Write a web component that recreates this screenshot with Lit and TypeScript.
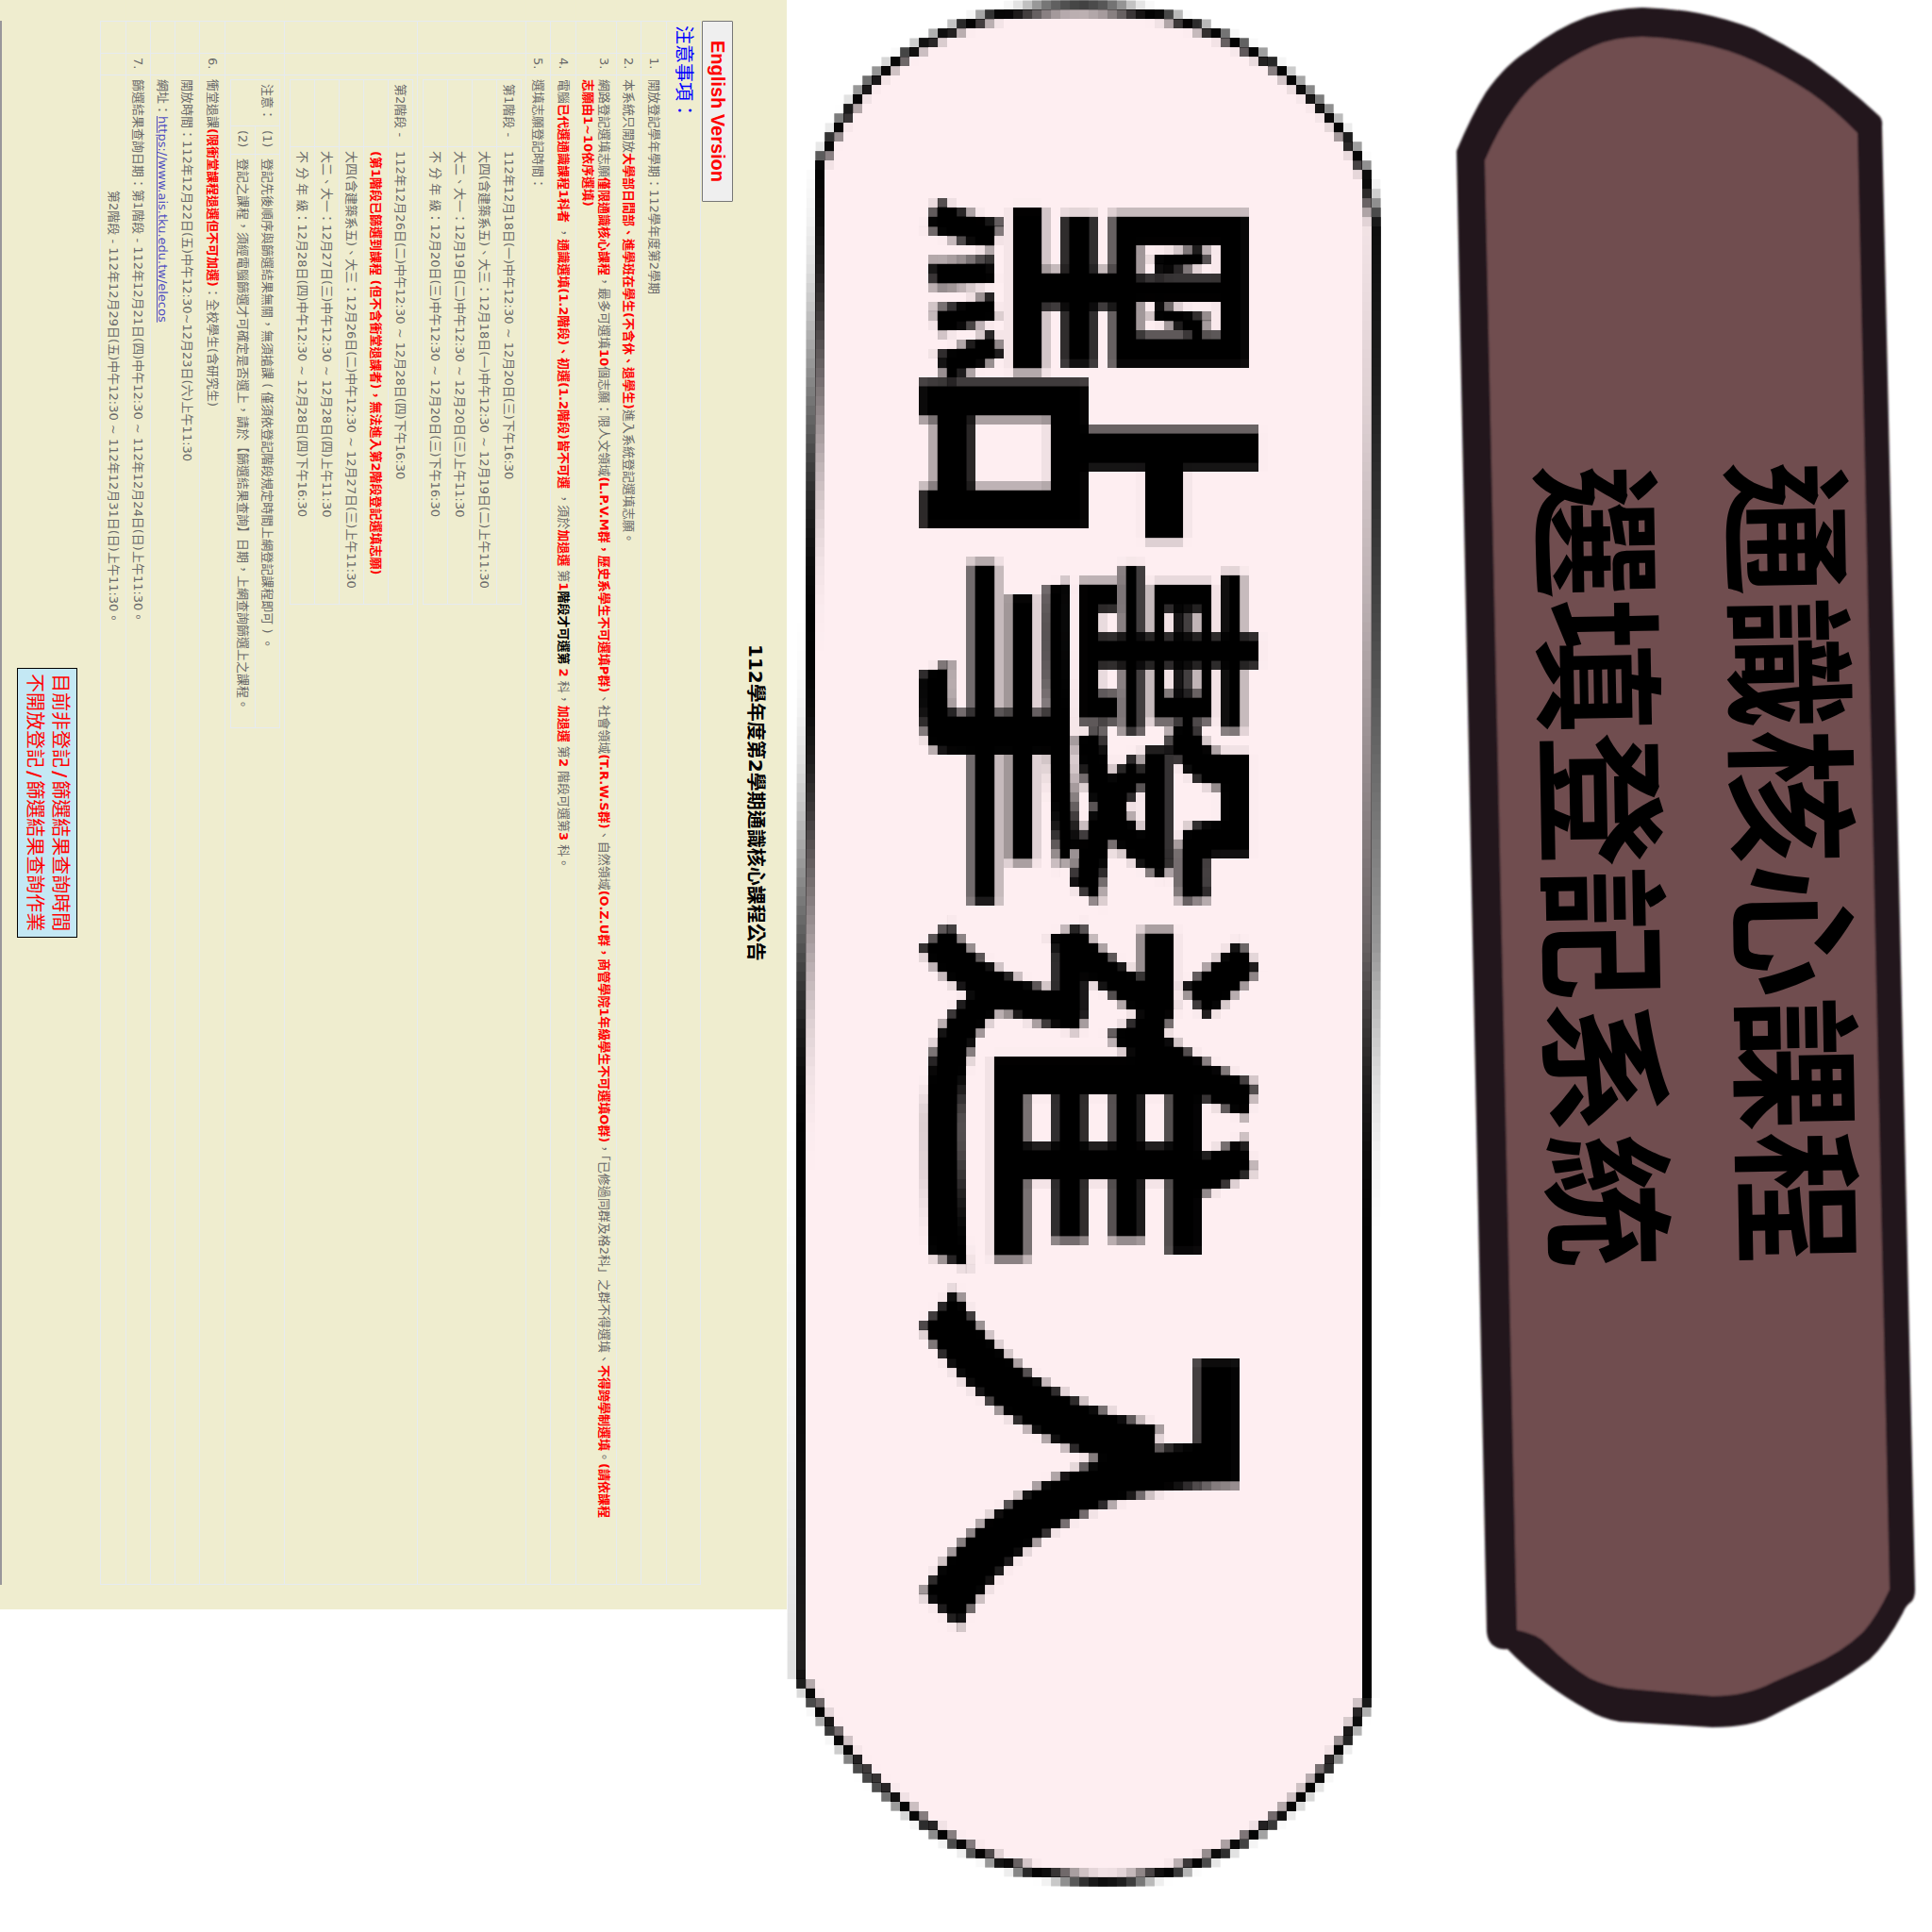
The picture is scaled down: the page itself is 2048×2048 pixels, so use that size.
import { LitElement, html, css } from "lit";
import { customElement } from "lit/decorators.js";

const fonts = css`"DejaVu Sans", "Noto Sans CJK TC", sans-serif`;

@customElement("system-banner")
class SystemBanner extends LitElement {
  static styles = css`
    :host {
      display: block;
      position: relative;
      writing-mode: vertical-rl;
      text-orientation: sideways;
    }
    .art {
      position: absolute;
      top: 0;
      left: 0;
      width: 100%;
      height: auto;
    }
    .name {
      position: relative;
      margin: 0;
      padding-block-start: 37px;
      padding-inline-start: 490px;
      font: 700 142px/202px "Noto Sans CJK TC", sans-serif;
      color: #000;
      transform: rotate(-1deg);
      white-space: nowrap;
    }
    .line {
      display: block;
    }
  `;
  render() {
    return html`
      <svg class="art" viewBox="1474 0 574 1840" aria-hidden="true">
        <defs>
          <filter id="soft" x="-2%" y="-2%" width="104%" height="104%">
            <feGaussianBlur stdDeviation="1" />
          </filter>
        </defs>
        <g filter="url(#soft)">
          <path
            fill="#21151c"
            d="M1544 160Q1560 122 1575 98Q1596 68 1622 52Q1650 30 1682 18Q1710 9 1741 8Q1772 9 1801 14Q1832 20 1860 31Q1890 46 1919 64Q1946 83 1972 105L1991 122Q1996 126 1995 134L2030 1685Q2030 1694 2026 1698Q2020 1702 2017 1710Q2000 1742 1982 1759Q1952 1782 1919 1798L1878 1819Q1856 1831 1815 1831L1717 1825Q1698 1822 1682 1812Q1660 1800 1640 1785Q1617 1768 1598 1748Q1590 1749 1584 1745Q1577 1741 1576 1730Z"
          />
          <path
            fill="#6f4d50"
            d="M1574 170Q1588 137 1605 114Q1620 92 1640 78Q1664 60 1689 49Q1712 39 1741 39Q1772 40 1801 46Q1832 52 1860 65Q1890 79 1919 98Q1946 117 1969 141L2003 1685Q1990 1713 1975 1730Q1952 1752 1919 1766L1880 1783Q1852 1798 1815 1798L1724 1790Q1704 1788 1685 1779Q1662 1765 1640 1743Q1630 1732 1608 1728Z"
          />
        </g>
      </svg>
      <h1 class="name">
        <span class="line">通識核心課程</span>
        <span class="line">選填登記系統</span>
      </h1>
    `;
  }
}

@customElement("enter-link")
class EnterLink extends LitElement {
  static styles = css`
    :host {
      display: block;
      writing-mode: vertical-rl;
      text-orientation: sideways;
    }
    .enter {
      display: block;
      position: relative;
      block-size: 100%;
      inline-size: 2010px;
      box-sizing: border-box;
      padding-block-start: 98px;
      padding-inline-start: 201px;
      font: 700 384px/400px "Noto Sans CJK TC", sans-serif;
      color: #000;
      text-decoration: none;
      white-space: nowrap;
      filter: url(#mosaic);
    }
    .art,
    .defs {
      position: absolute;
      top: 0;
      left: 0;
    }
    .art {
      width: 100%;
      height: auto;
    }
    .label {
      position: relative;
    }
  `;
  render() {
    return html`
      <a class="enter" href="#enter">
        <svg class="art" viewBox="834 0 640 2010" aria-hidden="true">
          <path
            fill="#feeef1"
            stroke="#000"
            stroke-width="10"
            d="M869 180Q878 148 900 119Q915 93 935 78Q964 54 998 38Q1030 22 1066 15Q1105 9 1146 9Q1190 9 1230 17Q1275 28 1314 48Q1349 66 1377 92Q1400 112 1419 136Q1437 160 1449 190L1457 240L1453 1000L1449 1300L1449 1798Q1436 1830 1419 1854Q1400 1884 1377 1906Q1347 1935 1314 1953Q1276 1975 1234 1985Q1200 1993 1167 1993Q1120 1990 1082 1980Q1038 1967 998 1944Q952 1913 914 1874Q878 1832 847 1775L849 1250L859 700Z"
          />
        </svg>
        <span class="label">點擊進入</span>
      </a>
      <svg class="defs" width="0" height="0" aria-hidden="true">
        <filter
          id="mosaic"
          filterUnits="userSpaceOnUse"
          x="0"
          y="0"
          width="640"
          height="2010"
          color-interpolation-filters="sRGB"
        >
          <feGaussianBlur in="SourceGraphic" stdDeviation="2" result="even" />
          <feFlood x="4" y="4" width="2" height="2" flood-color="#000" />
          <feComposite width="10" height="10" />
          <feTile result="grid" />
          <feComposite in="even" in2="grid" operator="in" />
          <feMorphology operator="dilate" radius="4" />
        </filter>
      </svg>
    `;
  }
}

interface Stage {
  label: string;
  rows: unknown[];
}

const stages: Stage[] = [
  {
    label: "第1階段 -",
    rows: [
      "112年12月18日(一)中午12:30 ~ 12月20日(三)下午16:30",
      "大四(含建築系五)、大三：12月18日(一)中午12:30 ~ 12月19日(二)上午11:30",
      "大二、大一：12月19日(二)中午12:30 ~ 12月20日(三)上午11:30",
      "不 分 年 級：12月20日(三)中午12:30 ~ 12月20日(三)下午16:30",
    ],
  },
  {
    label: "第2階段 -",
    rows: [
      "112年12月26日(二)中午12:30 ~ 12月28日(四)下午16:30",
      html`<b class="red">(第1階段已篩選到課程 (但不含衝堂退課者)，無法進入第2階段登記選填志願)</b>`,
      "大四(含建築系五)、大三：12月26日(二)中午12:30 ~ 12月27日(三)上午11:30",
      "大二、大一：12月27日(三)中午12:30 ~ 12月28日(四)上午11:30",
      "不 分 年 級：12月28日(四)中午12:30 ~ 12月28日(四)下午16:30",
    ],
  },
];

@customElement("course-notice")
class CourseNotice extends LitElement {
  static styles = css`
    :host {
      display: block;
      box-sizing: border-box;
      inline-size: 83.3%;
      padding-block-start: 20px;
      padding-inline: 22px 26px;
      writing-mode: vertical-rl;
      text-orientation: sideways;
      background: #efedcf;
      color: #696969;
      font: 13px/17px ${fonts};
    }
    .title {
      margin: 0;
      text-align: center;
      font-size: 20px;
      line-height: 26px;
      color: #000;
    }
    .actions {
      display: flex;
      margin-block: 11px 1px;
    }
    .english {
      writing-mode: vertical-rl;
      text-orientation: sideways;
      margin: 0;
      padding: 20px 4px;
      border: 1px solid #767676;
      border-radius: 1px;
      background: #efefef;
      color: #f00;
      font: 700 20px/23px "Liberation Sans", sans-serif;
    }
    table {
      border-collapse: collapse;
      table-layout: fixed;
      inline-size: 100%;
    }
    td,
    th {
      padding: 4px;
      border: 1px solid #e6ebf0;
      text-align: start;
      vertical-align: top;
      font-weight: 400;
    }
    .heading {
      font-size: 20px;
      line-height: 27px;
      color: #00f;
    }
    .roomy td {
      padding-block-end: 5px;
    }
    .nest {
      padding-block-end: 5px;
    }
    .col-gap {
      inline-size: 34px;
    }
    .col-num {
      inline-size: 23px;
    }
    .stage {
      inline-size: 557px;
    }
    .col-stage {
      inline-size: 71px;
    }
    .remarks {
      inline-size: 688px;
    }
    .col-remark {
      inline-size: 49px;
    }
    .col-mark {
      inline-size: 30px;
    }
    .indent {
      padding-inline-start: 122px;
    }
    .red {
      color: #f00;
    }
    .ink {
      color: #000;
    }
    .site {
      color: #4f4fc0;
    }
    .closed {
      inline-size: fit-content;
      margin-block: 24px 16px;
      margin-inline: auto;
      padding: 5px 4px;
      border: 1px solid #000;
      background: #c4e8f4;
      color: #f00;
      font-size: 20px;
      line-height: 27px;
      text-align: center;
    }
    .closed b {
      margin-inline: 3px;
      font-weight: 700;
    }
    .rule {
      margin: 0;
      border: 0;
      block-size: 2px;
      inline-size: 100%;
      background: #99979a;
    }
  `;

  row(num: string, body: unknown, cls = "", cell = "") {
    return html`<tr class=${cls}>
      <td></td>
      <td>${num}</td>
      <td class=${cell}>${body}</td>
    </tr>`;
  }

  stage(s: Stage) {
    return html`<table class="stage">
      <colgroup><col class="col-stage" /><col /></colgroup>
      <tbody>
        ${s.rows.map((r, i) => html`<tr><td>${i === 0 ? s.label : ""}</td><td>${r}</td></tr>`)}
      </tbody>
    </table>`;
  }

  render() {
    return html`
      <h2 class="title">112學年度第2學期通識核心課程公告</h2>
      <div class="actions"><button class="english" type="button">English Version</button></div>
      <table>
        <colgroup><col class="col-gap" /><col class="col-num" /><col /></colgroup>
        <thead>
          <tr><th class="heading" colspan="3">注意事項：</th></tr>
        </thead>
        <tbody>
          ${this.row("1.", "開放登記學年學期：112學年度第2學期", "roomy")}
          ${this.row("2.", html`本系統只開放<b class="red">大學部日間部、進學班在學生(不含休、退學生)</b>進入系統登記選填志願。`)}
          ${this.row("3.", html`網路登記選填志願<b class="red">僅限通識核心課程</b>，最多可選填<b class="red">10</b>個志願：限人文領域<b class="red">(L.P.V.M群，歷史系學生不可選填P群)</b>、社會領域<b class="red">(T.R.W.S群)</b>、自然領域<b class="red">(O.Z.U群，商管學院1年級學生不可選填O群)</b>，「已修過同群及格2科」之群不得選填、<b class="red">不得跨學制選填</b>。<b class="red">(請依課程<br />志願由1~10依序選填)</b>`)}
          ${this.row("4.", html`電腦<b class="red">已代選通識課程1科者</b> ，<b class="red">通識選填(1.2階段)、初選(1.2階段)皆不可選</b> ，須於<b class="red">加退選</b> 第<b class="red">1</b><b class="ink">階段才可選第</b> <b class="red">2</b> 科，<b class="red">加退選</b> 第<b class="red">2</b> 階段可選第<b class="red">3</b> 科。`, "roomy")}
          ${this.row("5.", "選填志願登記時間：")}
          ${this.row("", this.stage(stages[0]), "", "nest")}
          ${this.row("", this.stage(stages[1]), "", "nest")}
          ${this.row(
            "",
            html`<table class="remarks">
              <colgroup><col class="col-remark" /><col class="col-mark" /><col /></colgroup>
              <tbody>
                <tr>
                  <td rowspan="2">注意：</td>
                  <td>(1)</td>
                  <td>登記先後順序與篩選結果無關，無須搶課 ( 僅須依登記階段規定時間上網登記課程即可 ) 。</td>
                </tr>
                <tr>
                  <td>(2)</td>
                  <td>登記之課程，須經電腦篩選才可確定是否選上，請於【篩選結果查詢】日期，上網查詢篩選上之課程。</td>
                </tr>
              </tbody>
            </table>`,
            "",
            "nest"
          )}
          ${this.row("6.", html`衝堂退課<b class="red">(限衝堂課程退選但不可加選)</b>：全校學生(含研究生)`, "roomy")}
          ${this.row("", "開放時間：112年12月22日(五)中午12:30~12月23日(六)上午11:30")}
          ${this.row("", html`網址：<a class="site" href="https://www.ais.tku.edu.tw/elecos">https://www.ais.tku.edu.tw/elecos</a>`)}
          ${this.row("7.", "篩選結果查詢日期：第1階段 - 112年12月21日(四)中午12:30 ~ 112年12月24日(日)上午11:30。")}
          ${this.row("", "第2階段 - 112年12月29日(五)中午12:30 ~ 112年12月31日(日)上午11:30。", "roomy", "indent")}
        </tbody>
      </table>
      <div class="closed">目前非登記<b>/</b>篩選結果查詢時間<br />不開放登記<b>/</b>篩選結果查詢作業</div>
      <hr class="rule" />
    `;
  }
}

@customElement("app-root")
class AppRoot extends LitElement {
  static styles = css`
    :host {
      display: grid;
      writing-mode: vertical-rl;
      text-orientation: sideways;
      grid-template-rows: minmax(0, 287fr) minmax(0, 320fr) minmax(0, 417fr);
      grid-template-columns: minmax(0, 1fr);
      width: 100%;
      height: 100vh;
      overflow: hidden;
      background: #fff;
    }
  `;
  render() {
    return html`
      <system-banner></system-banner>
      <enter-link></enter-link>
      <course-notice></course-notice>
    `;
  }
}
